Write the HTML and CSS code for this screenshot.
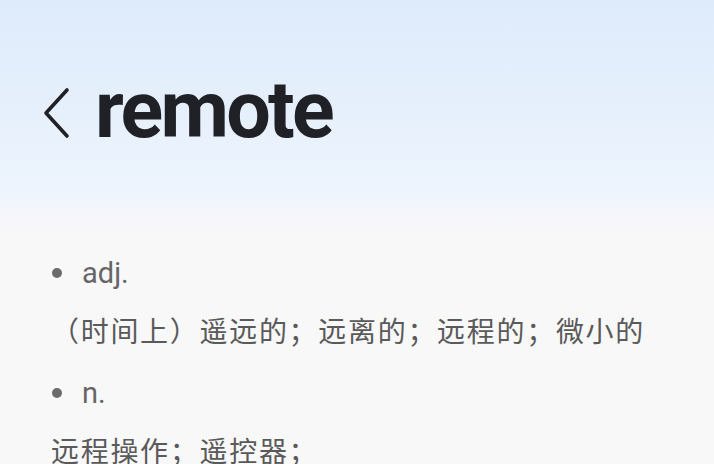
FILE: index.html
```html
<!DOCTYPE html>
<html lang="zh-CN">
<head>
<meta charset="utf-8">
<title>remote</title>
<link rel="stylesheet" href="styles.css">
</head>
<body>
<div class="page">
  <header class="head">
    <button class="back" aria-label="返回">
      <svg width="30" height="52" viewBox="0 0 30 52"><path d="M26 3 L5 26 L26 49" fill="none" stroke="#1f2126" stroke-width="3.6" stroke-linecap="round" stroke-linejoin="round"/></svg>
    </button>
    <h1 class="word">remote</h1>
  </header>
  <main class="defs">
    <div class="pos"><span class="dot"></span><span class="pos-name">adj.</span></div>
    <p class="meaning indent">（时间上）遥远的；远离的；远程的；微小的</p>
    <div class="pos"><span class="dot"></span><span class="pos-name">n.</span></div>
    <p class="meaning">远程操作；遥控器；</p>
  </main>
</div>
</body>
</html>
```
FILE: styles.css
```css
html, body {
  margin: 0;
  padding: 0;
}
body {
  width: 714px;
  height: 464px;
  overflow: hidden;
  background: #f8f8f9;
  font-family: Roboto, "Noto Sans CJK SC", sans-serif;
}
.page {
  height: 100%;
  background: linear-gradient(180deg, #deebfb 0px, #e6f0fc 110px, #edf4fd 190px, #f7f7fa 222px, #f8f8f9 240px);
}
.head {
  height: 236px;
  display: flex;
  align-items: flex-start;
  padding-left: 41px;
  box-sizing: border-box;
}
.back {
  margin-top: 87px;
  padding: 0;
  border: 0;
  background: none;
  display: flex;
  width: 30px;
  height: 52px;
}
.word {
  margin: 70px 0 0 24px;
  font-family: Roboto, sans-serif;
  font-weight: 700;
  font-size: 79px;
  line-height: 80px;
  letter-spacing: -2.7px;
  color: #1f2126;
}
.defs {
  padding-left: 51px;
  color: #555;
}
.pos {
  display: flex;
  align-items: center;
  height: 40px;
  margin-top: 20px;
}
.pos:first-child {
  margin-top: 17px;
}
.dot {
  width: 10px;
  height: 10px;
  border-radius: 50%;
  background: #6b6b6b;
  margin-left: 1px;
  margin-right: 20px;
}
.pos-name {
  font-size: 29px;
  color: #666;
}
.meaning {
  margin: 20px 0 0;
  font-size: 28px;
  line-height: 40px;
  letter-spacing: 1.7px;
  color: #5a5a5a;
}
```
